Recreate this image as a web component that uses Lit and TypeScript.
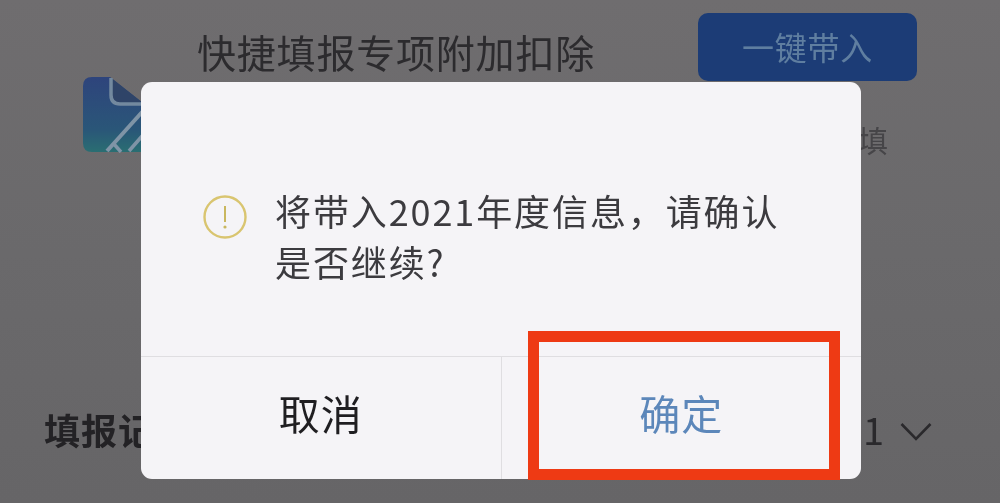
import { LitElement, html, css } from "lit";
import { customElement } from "lit/decorators.js";

@customElement("app-root")
export class AppRoot extends LitElement {
  static styles = css`
    :host {
      display: block;
      width: 1000px;
      height: 503px;
      font-family: "Noto Sans CJK SC", "Noto Sans", sans-serif;
    }
    .page {
      position: relative;
      width: 1000px;
      height: 503px;
      overflow: hidden;
      background: linear-gradient(180deg, #6f6d6f 0%, #6a696b 50%, #666567 100%);
      display: flex;
      flex-direction: column;
      filter: blur(0.7px);
    }
    .card {
      display: grid;
      grid-template-columns: 83px 114px 1fr 219px 83px;
      grid-template-rows: 68px 1fr;
      padding-top: 13px;
      height: 320px;
      box-sizing: border-box;
    }
    .doc {
      grid-column: 2 / 4;
      grid-row: 1 / 3;
      margin-top: 64px;
      width: 90px;
      height: 76px;
    }
    .title {
      grid-column: 3;
      grid-row: 1;
      align-self: center;
      margin-top: 8px;
      font-size: 39px;
      line-height: 48px;
      letter-spacing: 0.8px;
      color: #2c2b2e;
      white-space: nowrap;
    }
    .action {
      grid-column: 4;
      grid-row: 1;
      display: flex;
      align-items: center;
      justify-content: center;
      padding-bottom: 3px;
      box-sizing: border-box;
      border-radius: 10px;
      background: #1c3c76;
      color: #5f7ea0;
      font-size: 32px;
      letter-spacing: 0.8px;
    }
    .hint {
      grid-column: 3 / 5;
      grid-row: 2;
      justify-self: end;
      margin: 36px 29px 0 0;
      font-size: 30px;
      line-height: 44px;
      color: #464548;
    }
    .records {
      display: flex;
      align-items: center;
      padding: 89px 68px 0 44px;
    }
    .records-name {
      font-size: 36px;
      line-height: 40px;
      font-weight: 700;
      letter-spacing: 1px;
      color: #232225;
    }
    .records-year {
      margin-left: auto;
      font-size: 38px;
      line-height: 40px;
      color: #2a292c;
    }
    .chevron {
      width: 32px;
      height: 20px;
      margin-left: 16px;
      margin-top: 6px;
    }
    .dialog {
      position: absolute;
      left: 141px;
      top: 82px;
      width: 720px;
      height: 397px;
      border-radius: 11px;
      background: #f5f4f7;
      display: flex;
      flex-direction: column;
    }
    .body {
      flex: 1;
      display: flex;
      gap: 28px;
      padding: 103px 70px 0 62px;
    }
    .warn {
      flex: none;
      width: 44px;
      height: 44px;
      margin-top: 10px;
    }
    .msg {
      margin: 0;
      font-size: 36px;
      line-height: 51px;
      letter-spacing: 1.9px;
      color: #3c3b3f;
      word-break: break-all;
    }
    .foot {
      display: flex;
      height: 122px;
      border-top: 1px solid #dfdee1;
    }
    .btn {
      flex: 1;
      display: flex;
      align-items: center;
      justify-content: center;
      padding-bottom: 12px;
      font-size: 41px;
      letter-spacing: 1px;
      color: #1f1e21;
    }
    .btn + .btn {
      border-left: 1px solid #dfdee1;
    }
    .btn.ok {
      color: #5c87ba;
    }
    .mark {
      position: absolute;
      left: 387px;
      top: 249px;
      width: 312px;
      height: 149px;
      box-sizing: border-box;
      border: 11px solid #ee3a14;
    }
  `;

  render() {
    return html`
      <div class="page">
        <div class="card">
          <svg class="doc" viewBox="0 0 90 76" fill="none">
            <defs>
              <linearGradient id="g" x1="0" y1="0" x2="0" y2="1">
                <stop offset="0" stop-color="#2e447c" />
                <stop offset="0.7" stop-color="#2a5678" />
                <stop offset="1" stop-color="#2a6e72" />
              </linearGradient>
            </defs>
            <path d="M9 0H27L60 26V75H9Q0 75 0 66V9Q0 0 9 0Z" fill="url(#g)" />
            <path d="M27 0L60 26H36Q29 26 29 19V3Z" fill="#2f4468" />
            <path d="M28 1V18Q28 27 37 27H60" stroke="#73899f" stroke-width="3.5" />
            <path d="M24 74L60 34" stroke="#7f94a6" stroke-width="4" />
            <path d="M30 66L38 75M46 74L60 58" stroke="#7f94a6" stroke-width="3.5" />
          </svg>
          <div class="title">快捷填报专项附加扣除</div>
          <div class="action">一键带入</div>
          <div class="hint">填</div>
        </div>
        <div class="records">
          <span class="records-name">填报记录</span>
          <span class="records-year">2021</span>
          <svg class="chevron" viewBox="0 0 32 20" fill="none">
            <path d="M1.5 2L16 17L30.5 2" stroke="#2a292c" stroke-width="2.6" />
          </svg>
        </div>
        <div class="dialog">
          <div class="body">
            <svg class="warn" viewBox="0 0 44 44" fill="none">
              <circle cx="22" cy="22" r="20.5" stroke="#d9c570" stroke-width="2.4" />
              <path d="M22 11V27" stroke="#c9b75f" stroke-width="2" />
              <circle cx="22" cy="32" r="1.6" fill="#c9b75f" />
            </svg>
            <p class="msg">将带入2021年度信息，请确认是否继续?</p>
          </div>
          <div class="foot">
            <div class="btn">取消</div>
            <div class="btn ok">确定</div>
          </div>
          <div class="mark"></div>
        </div>
      </div>
    `;
  }
}
